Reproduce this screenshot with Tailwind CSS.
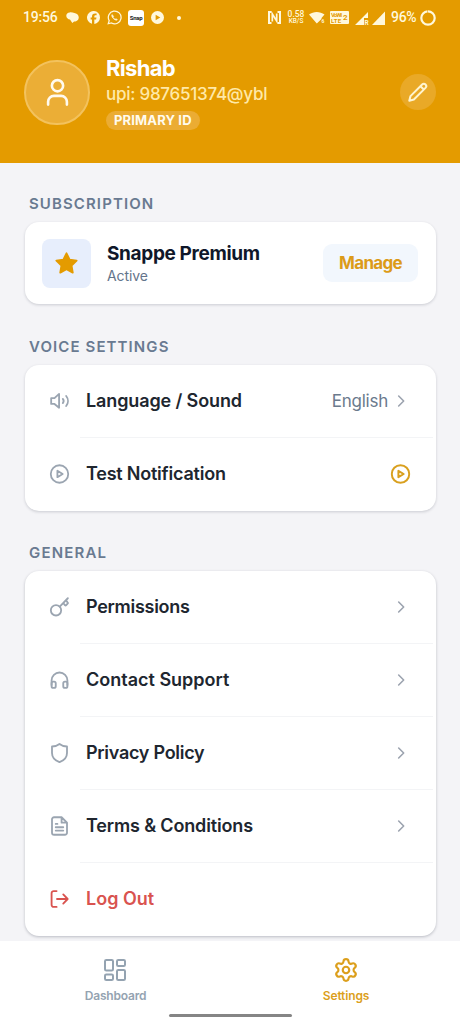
<!DOCTYPE html>
<html lang="en">
<head>
<meta charset="utf-8">
<title>Settings</title>
<script src="https://cdn.jsdelivr.net/npm/@tailwindcss/browser@4"></script>
</head>
<body class="w-[460px] h-[1024px] overflow-hidden bg-[#f4f4f7] font-['Inter',sans-serif] flex flex-col">
<svg class="hidden"><defs>
<symbol id="chev" viewBox="0 0 24 24"><path d="m8.500 4.500 7.500 7.500-7.500 7.500"/></symbol>
<symbol id="play" viewBox="0 0 24 24"><circle cx="12" cy="12" r="10.500"/><path d="M9.500 8.200v7.600l6.300-3.800z"/></symbol>
</defs></svg>

<header class="h-[163px] shrink-0 bg-[#e49b00] text-white">
  <div class="h-[35px] pl-[23px] pr-[24px] flex items-center font-['Roboto',sans-serif] text-[#fff8dc]">
    <span class="text-[14px] font-medium w-[34px] whitespace-nowrap tracking-[-0.2px]">19:56</span>
    <svg class="ml-[9px] w-[13px] h-[13px]" viewBox="0 0 14 14" fill="currentColor"><path d="M4 1.500C1.800 1.500.3 3 .3 5c0 2.200 1.900 3.900 4 4.200L6.800 13l1.900-1.700c3 .1 5.300-1.900 5-4.900-.2-2.400-2.200-4.100-4.700-4.300C7.700 1.600 5.800 1.400 4 1.500z"/></svg>
    <svg class="ml-[8px] w-[13px] h-[13px]" viewBox="0 0 24 24" fill="currentColor"><path d="M24 12a12 12 0 1 0-14.800 11.650v-8H6.700V12h2.500v-1.600c0-4.100 1.900-6 5.900-6 .8 0 2.100.15 2.600.3v3.300h-1.400c-2 0-2.800.7-2.800 2.700V12h4l-.7 3.650h-3.300v8.300A12 12 0 0 0 24 12z"/></svg>
    <svg class="ml-[7px] w-[15px] h-[15px]" viewBox="0 0 24 24" fill="none" stroke="currentColor" stroke-width="2"><path d="M2 22l1.500-5A10.200 10.200 0 1 1 7.200 20.700z"/><path d="M8.200 7.300c-1.200 1.200-.8 3.500 1.800 6.200s5.200 3.500 6.600 1.900l-2.300-1.600-1.200 1.100c-1.400-.5-2.800-1.900-3.500-3.400l1-1.300z" fill="currentColor" stroke-width="1"/></svg>
    <span class="ml-[6px] w-[16px] h-[16px] rounded-[3px] bg-white text-[#222] text-[6px] font-bold leading-[15px] text-center tracking-[-0.3px]">Snap</span>
    <svg class="ml-[7px] w-[13px] h-[13px]" viewBox="0 0 14 14"><circle cx="7" cy="7" r="7" fill="currentColor"/><path d="M5 4v6L10 7z" fill="#e49b00"/></svg>
    <span class="ml-[13px] w-[4px] h-[4px] rounded-full bg-current"></span>
    <svg class="ml-auto w-[13px] h-[13px]" viewBox="0 0 13 13" fill="none" stroke="currentColor" stroke-width="2"><path d="M3.500 1H1v11h2.500M9.500 1H12v11H9.500"/><path d="M4.300 10.500V3l4.400 7V2.500" stroke-width="1.700"/></svg>
    <span class="ml-[6px] w-[18px] flex flex-col items-center font-medium"><span class="text-[8.500px] leading-[7px]">0.58</span><span class="text-[6.500px] leading-[6px]">KB/S</span></span>
    <svg class="ml-[4px] w-[16px] h-[13px]" viewBox="0 0 16 13" fill="currentColor"><path d="M0 3.500C4.500 0 11 0 15.500 3.500L12.500 7v1L7.800 12.500z"/><text x="12.500" y="12" font-size="5" font-weight="700">6</text></svg>
    <svg class="ml-[5px] w-[19px] h-[13px]" viewBox="0 0 19 13"><rect width="19" height="13" rx="1" fill="currentColor"/><g fill="#e49b00" font-size="6" font-weight="700"><text x="1" y="5.700" textLength="11">VoWi</text><text x="1" y="12" textLength="10">LTE</text><text x="13" y="9" font-size="8">2</text></g></svg>
    <svg class="ml-[6px] w-[14px] h-[14px]" viewBox="0 0 14 14" fill="currentColor"><path d="M0 14 13 1v6H9v7z"/><text x="9.500" y="13.500" font-size="6.500" font-weight="700">R</text></svg>
    <svg class="ml-[3px] w-[13px] h-[14px]" viewBox="0 0 13 14" fill="currentColor"><path d="M0 14 13 .5V14z"/></svg>
    <span class="ml-[6px] w-[25px] text-[14px] font-medium whitespace-nowrap tracking-[-0.3px]">96%</span>
    <svg class="ml-[4px] w-[16px] h-[16px]" viewBox="0 0 16 16" fill="none" stroke="currentColor" stroke-width="2.200"><circle cx="8" cy="8" r="6.700" stroke-dasharray="41.300 .8" transform="rotate(-90 8 8)"/></svg>
  </div>
  <div class="pl-[24px] pr-[24px] pt-[20px] flex">
    <div class="mt-[5px] w-[66px] h-[65px] rounded-full bg-[#ebae36] border-2 border-[#f3c25d] flex items-center justify-center">
      <svg class="w-[31px] h-[31px]" viewBox="0 0 32 32" fill="none" stroke="#fffaf0" stroke-width="2.700" stroke-linecap="round" stroke-linejoin="round"><circle cx="16" cy="9" r="5.800"/><path d="M6.300 28.500v-3a6 6 0 0 1 6-6h7.400a6 6 0 0 1 6 6v3"/></svg>
    </div>
    <div class="ml-[16px] flex flex-col items-start whitespace-nowrap">
      <span class="text-[22px] leading-[26px] font-bold tracking-[-0.7px]">Rishab</span>
      <span class="mt-[1px] text-[17px] leading-[24px] tracking-[-0.25px] font-medium text-[#ffe9a8]">upi: 987651374@ybl</span>
      <span class="mt-[5px] h-[19px] px-[8px] rounded-full bg-[#ebac33] text-[13px] leading-[19px] font-bold tracking-[0.15px] text-[#fffbef]">PRIMARY ID</span>
    </div>
    <div class="ml-auto mt-[19px] w-[36px] h-[36px] rounded-full bg-[#e9a927] flex items-center justify-center">
      <svg class="w-[22px] h-[22px]" viewBox="0 0 24 24" fill="none" stroke="#fff4cf" stroke-width="2.200" stroke-linecap="round" stroke-linejoin="round"><path d="M16.500 3.800a2.600 2.600 0 0 1 3.700 3.700L7.500 20.200 2.500 21.500l1.300-5zM15.500 6.500l2 2"/></svg>
    </div>
  </div>
</header>

<main class="flex-1 min-h-0 overflow-hidden px-[25px] text-[#20262f]">
  <h2 class="ml-[4px] mt-[31px] h-[20px] leading-[20px] text-[15px] font-semibold tracking-[1.1px] text-[#697a91]">SUBSCRIPTION</h2>
  <section class="mt-[8px] h-[82px] w-[411px] rounded-[14px] bg-white shadow-[0_1px_3px_rgba(15,23,42,0.18)] pl-[17px] pr-[18px] flex items-center whitespace-nowrap">
    <div class="w-[49px] h-[49px] rounded-[8px] bg-[#e7eefc] flex items-center justify-center">
      <svg class="w-[25px] h-[25px]" viewBox="0 0 24 24" fill="#e49b00" stroke="#e49b00" stroke-width="1.800" stroke-linejoin="round"><path d="m12 2.200 3 6.100 6.700 1-4.850 4.700 1.150 6.700-6-3.150-6 3.150L7.150 14 2.300 9.300l6.700-1z"/></svg>
    </div>
    <div class="ml-[16px] pt-[2px] flex flex-col">
      <span class="text-[19px] leading-[24px] font-bold tracking-[-0.35px] text-[#0f172a]">Snappe Premium</span>
      <span class="text-[14px] leading-[20px] tracking-[-0.1px] text-[#64748b]">Active</span>
    </div>
    <span class="ml-auto w-[95px] h-[38px] rounded-[9px] bg-[#f2f7fd] text-[#dc9b18] text-[17px] leading-[39px] font-bold tracking-[-0.7px] text-center">Manage</span>
  </section>

  <h2 class="ml-[4px] mt-[33px] h-[20px] leading-[20px] text-[15px] font-semibold tracking-[1.1px] text-[#697a91]">VOICE SETTINGS</h2>
  <section class="mt-[8px] h-[146px] w-[411px] rounded-[14px] bg-white shadow-[0_1px_3px_rgba(15,23,42,0.18)] text-[18px] font-semibold">
    <div class="h-[73px] pl-[24px] pr-[27px] pb-[2px] flex items-center">
      <svg class="w-[21px] h-[20px]" viewBox="0 0 24 24" fill="none" stroke="#9ba5b1" stroke-width="2.200" stroke-linecap="round" stroke-linejoin="round"><path d="M2 8.500v7h4l5.500 4.500V3.500L6 8.500zM16 9.500a4 4 0 0 1 0 5M20 6a9.500 9.500 0 0 1 0 12"/></svg>
      <span class="ml-[16px] tracking-[-0.12px]">Language / Sound</span>
      <span class="ml-auto pt-[2px] text-[17px] font-normal tracking-[-0.25px] text-[#6b7a8d]">English</span>
      <svg class="ml-[5px] w-[16px] h-[16px]" fill="none" stroke="#9ca3af" stroke-width="2.400" stroke-linecap="round" stroke-linejoin="round"><use href="#chev"/></svg>
    </div>
    <div class="ml-[55px] mr-[3px] h-px bg-[#f3f4f6] -mt-px"></div>
    <div class="h-[73px] pl-[24px] pr-[25px] pb-[2px] flex items-center">
      <svg class="w-[21px] h-[20px]" viewBox="0 0 24 24" fill="none" stroke="#9ba5b1" stroke-width="2.200" stroke-linejoin="round"><use href="#play"/></svg>
      <span class="ml-[16px] tracking-[-0.22px]">Test Notification</span>
      <svg class="ml-auto w-[21px] h-[20px]" viewBox="0 0 24 24" fill="none" stroke="#d9a01f" stroke-width="2.400" stroke-linejoin="round"><use href="#play"/></svg>
    </div>
  </section>

  <h2 class="ml-[4px] mt-[32px] h-[20px] leading-[20px] text-[15px] font-semibold tracking-[1.18px] text-[#697a91]">GENERAL</h2>
  <section class="mt-[8px] h-[365px] w-[411px] rounded-[14px] bg-white shadow-[0_1px_3px_rgba(15,23,42,0.25)] text-[18px] font-semibold">
    <div class="h-[73px] pl-[24px] pr-[27px] pb-[2px] flex items-center">
      <svg class="w-[21px] h-[20px]" viewBox="0 0 24 24" fill="none" stroke="#9ba5b1" stroke-width="2.200" stroke-linecap="round" stroke-linejoin="round"><circle cx="7.800" cy="16" r="6.200"/><path d="m12.300 11.500 9.700-10M16.500 7.200l2 2.600q.8.800 1.600 0l1.600-1.800q.8-.8 0-1.600l-1.900-2.300"/></svg>
      <span class="ml-[16px] tracking-[-0.28px]">Permissions</span>
      <svg class="ml-auto w-[16px] h-[16px]" fill="none" stroke="#9ca3af" stroke-width="2.400" stroke-linecap="round" stroke-linejoin="round"><use href="#chev"/></svg>
    </div>
    <div class="ml-[55px] mr-[3px] h-px bg-[#f3f4f6] -mt-px"></div>
    <div class="h-[73px] pl-[24px] pr-[27px] pb-[2px] flex items-center">
      <svg class="w-[21px] h-[20px]" viewBox="0 0 24 24" fill="none" stroke="#9ba5b1" stroke-width="2.200" stroke-linecap="round" stroke-linejoin="round"><path d="M2.500 18v-5.500a9.500 9.500 0 0 1 19 0V18"/><rect x="2.500" y="14" width="5" height="7.500" rx="2"/><rect x="16.500" y="14" width="5" height="7.500" rx="2"/></svg>
      <span class="ml-[16px]">Contact Support</span>
      <svg class="ml-auto w-[16px] h-[16px]" fill="none" stroke="#9ca3af" stroke-width="2.400" stroke-linecap="round" stroke-linejoin="round"><use href="#chev"/></svg>
    </div>
    <div class="ml-[55px] mr-[3px] h-px bg-[#f3f4f6] -mt-px"></div>
    <div class="h-[73px] pl-[24px] pr-[27px] pb-[2px] flex items-center">
      <svg class="w-[21px] h-[20px]" viewBox="0 0 24 24" fill="none" stroke="#9ba5b1" stroke-width="2.200" stroke-linecap="round" stroke-linejoin="round"><path d="M12 1.200c2.500 2 5.200 3 9 3V12c0 5.500-3.500 9-9 11C6.500 21 3 17.500 3 12V4.200c3.800 0 6.500-1 9-3z"/></svg>
      <span class="ml-[16px] tracking-[-0.28px]">Privacy Policy</span>
      <svg class="ml-auto w-[16px] h-[16px]" fill="none" stroke="#9ca3af" stroke-width="2.400" stroke-linecap="round" stroke-linejoin="round"><use href="#chev"/></svg>
    </div>
    <div class="ml-[55px] mr-[3px] h-px bg-[#f3f4f6] -mt-px"></div>
    <div class="h-[73px] pl-[24px] pr-[27px] pb-[2px] flex items-center">
      <svg class="w-[21px] h-[20px]" viewBox="0 0 24 24" fill="none" stroke="#9ba5b1" stroke-width="2.200" stroke-linecap="round" stroke-linejoin="round"><path d="M14.500 1.500H5.500A2.500 2.500 0 0 0 3 4v16a2.500 2.500 0 0 0 2.500 2.500h13A2.500 2.500 0 0 0 21 20V8zM14.500 1.500V8H21M7.500 9.500h2M7.500 13.500h9M7.500 17.500h9"/></svg>
      <span class="ml-[16px] tracking-[-0.15px]">Terms &amp; Conditions</span>
      <svg class="ml-auto w-[16px] h-[16px]" fill="none" stroke="#9ca3af" stroke-width="2.400" stroke-linecap="round" stroke-linejoin="round"><use href="#chev"/></svg>
    </div>
    <div class="ml-[55px] mr-[3px] h-px bg-[#f3f4f6] -mt-px"></div>
    <div class="h-[73px] pl-[24px] pr-[27px] pb-[2px] flex items-center text-[#d9534f]">
      <svg class="w-[21px] h-[20px]" viewBox="0 0 24 24" fill="none" stroke="currentColor" stroke-width="2.200" stroke-linecap="round" stroke-linejoin="round"><path d="M8.500 2.500H5A2.500 2.500 0 0 0 2.500 5v14A2.500 2.500 0 0 0 5 21.500h3.500M9 12h12.500M16.500 6.500l5.300 5.500-5.300 5.500"/></svg>
      <span class="ml-[16px]">Log Out</span>
    </div>
  </section>
</main>

<nav class="relative h-[83px] shrink-0 bg-white grid grid-cols-2 text-[12px] font-semibold">
  <div class="pt-[16px] flex flex-col items-center text-[#94a3b1]">
    <svg class="w-[26px] h-[26px]" viewBox="0 0 26 26" fill="none" stroke="currentColor" stroke-width="2" stroke-linejoin="round"><rect x="3" y="3" width="8" height="10.500" rx="1.300"/><rect x="15" y="3" width="8" height="6" rx="1.300"/><rect x="3" y="17.500" width="8" height="5.500" rx="1.300"/><rect x="15" y="13" width="8" height="10" rx="1.300"/></svg>
    <span class="mt-[5px] ml-px leading-[16px] tracking-[-0.2px]">Dashboard</span>
  </div>
  <div class="pt-[16px] flex flex-col items-center text-[#dc9f1c]">
    <svg class="ml-px w-[26px] h-[26px]" viewBox="0 0 24 24" fill="none" stroke="currentColor" stroke-width="2" stroke-linecap="round" stroke-linejoin="round"><path d="M9.671 4.136a2.340 2.340 0 0 1 4.659 0 2.340 2.340 0 0 0 3.319 1.915 2.340 2.340 0 0 1 2.330 4.033 2.340 2.340 0 0 0 0 3.831 2.340 2.340 0 0 1-2.330 4.033 2.340 2.340 0 0 0-3.319 1.915 2.340 2.340 0 0 1-4.659 0 2.340 2.340 0 0 0-3.320-1.915 2.340 2.340 0 0 1-2.330-4.033 2.340 2.340 0 0 0 0-3.831A2.340 2.340 0 0 1 6.350 6.051a2.340 2.340 0 0 0 3.319-1.915"/><circle cx="12" cy="12" r="3"/></svg>
    <span class="mt-[5px] ml-[2px] leading-[16px] tracking-[-0.15px]">Settings</span>
  </div>
  <div class="absolute left-[169px] bottom-[7px] w-[123px] h-[3px] rounded-full bg-[#858585]"></div>
</nav>
</body>
</html>
